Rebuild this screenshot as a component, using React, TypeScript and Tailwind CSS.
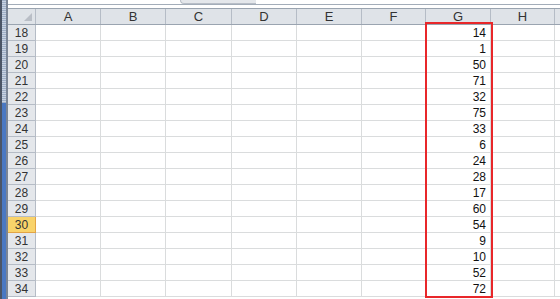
import React from 'react';

const columns = [
  { label: 'A', w: 'w-[65px]' },
  { label: 'B', w: 'w-[65px]' },
  { label: 'C', w: 'w-[66px]' },
  { label: 'D', w: 'w-[65px]' },
  { label: 'E', w: 'w-[65px]' },
  { label: 'F', w: 'w-[64px]' },
  { label: 'G', w: 'w-[65px]' },
  { label: 'H', w: 'w-[64px]' },
];

const values = [14, 1, 50, 71, 32, 75, 33, 6, 24, 28, 17, 60, 54, 9, 10, 52, 72];

const App: React.FC = () => {
  return (
    <div className="w-[560px] h-[299px] overflow-hidden bg-white flex font-['Liberation_Sans',sans-serif] text-[#333]">
      {/* left window edge */}
      <div className="w-[8px] h-full flex shrink-0">
        <div className="w-[2px] bg-[#4b5566]" />
        <div className="w-[4px] flex flex-col">
          <div className="h-[103px] bg-[repeating-linear-gradient(0deg,#9fb0c8_0px,#9fb0c8_1px,#c9d3e2_1px,#c9d3e2_2px)]" />
          <div className="flex-1 bg-[#4a78c2]" />
        </div>
        <div className="w-[2px] bg-[#7a8596]" />
      </div>

      <div className="flex-1 flex flex-col relative">
        {/* formula bar edge */}
        <div className="h-[4px] relative">
          <div className="absolute left-[172px] top-0 w-[76px] h-[4px] bg-[#e4e7eb] rounded-bl-[8px] border-b border-l border-[#b8bec7]" />
        </div>
        <div className="h-[1px] bg-[#a3adb9]" />
        <div className="h-[3px]" />

        {/* column header */}
        <div className="flex h-[17px] bg-[#dfe3e8] border-t border-b border-[#9aa4b0]">
          <div className="w-[28px] shrink-0 border-r border-[#b5bcc6] relative">
            <div className="absolute right-[3px] bottom-[3px] w-0 h-0 border-l-[8px] border-l-transparent border-b-[8px] border-b-[#b9bec6]" />
          </div>
          {columns.map(c => (
            <div key={c.label} className={`${c.w} shrink-0 border-r border-[#b5bcc6] flex items-center justify-center text-[13px] leading-none`}>
              {c.label}
            </div>
          ))}
          <div className="flex-1" />
        </div>

        {/* rows */}
        {values.map((v, i) => {
          const row = 18 + i;
          const active = row === 30;
          return (
            <div key={row} className="flex h-[16px]">
              <div className={`w-[28px] shrink-0 flex items-center justify-center text-[12px] leading-none border-b border-r ${active ? 'bg-[#f9d36a] border-[#e2a445]' : 'bg-[#e4e7eb] border-[#b5bcc6]'}`}>
                {row}
              </div>
              {columns.map(c => (
                <div key={c.label} className={`${c.w} shrink-0 border-r border-b border-[#dadcdd] flex items-center justify-end pr-[4px] text-[12px] leading-none text-[#111]`}>
                  {c.label === 'G' ? v : ''}
                </div>
              ))}
              <div className="flex-1 border-b border-[#dadcdd]" />
            </div>
          );
        })}

        {/* selection outline around column G */}
        <div className="absolute left-[417px] top-[22px] w-[68px] h-[276px] border-2 border-[#e8272a] pointer-events-none" />
      </div>
    </div>
  );
};

export default App;
